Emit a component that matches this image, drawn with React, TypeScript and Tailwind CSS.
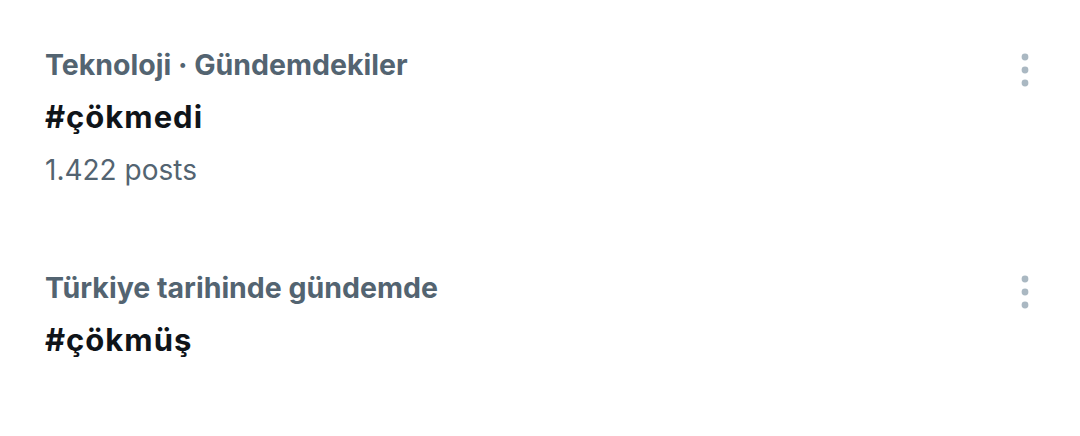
import React from "react";

function Dots() {
  return (
    <svg width="8" height="34" viewBox="0 0 8 34" className="block">
      <circle cx="4" cy="4" r="3.4" fill="#aab8c2" />
      <circle cx="4" cy="17" r="3.4" fill="#aab8c2" />
      <circle cx="4" cy="30" r="3.4" fill="#aab8c2" />
    </svg>
  );
}

export default function App() {
  const font = { fontFamily: "Inter, 'Noto Sans', sans-serif" };
  return (
    <div className="w-[1080px] h-[436px] bg-white" style={font}>
      <div className="flex justify-between pl-[45px] pr-[51px] pt-[47px]">
        <div className="flex flex-col">
          <div className="text-[28.5px] leading-[36px] font-bold text-[#536471]">Teknoloji · Gündemdekiler</div>
          <div className="mt-[14px] text-[31px] leading-[40px] font-bold text-[#0f1419] tracking-[1px]">#çökmedi</div>
          <div className="mt-[15px] text-[28px] leading-[36px] text-[#536471]">1.422 posts</div>
        </div>
        <div className="pt-[6px]"><Dots /></div>
      </div>
      <div className="flex justify-between pl-[45px] pr-[51px] pt-[82px]">
        <div className="flex flex-col">
          <div className="text-[28.5px] leading-[36px] font-bold text-[#536471]">Türkiye tarihinde gündemde</div>
          <div className="mt-[14px] text-[31px] leading-[40px] font-bold text-[#0f1419] tracking-[1px]">#çökmüş</div>
        </div>
        <div className="pt-[5px]"><Dots /></div>
      </div>
    </div>
  );
}
